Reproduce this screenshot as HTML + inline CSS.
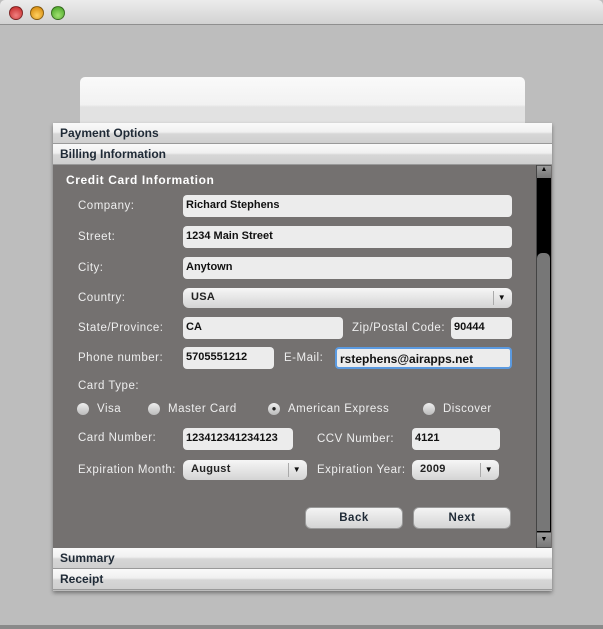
<!DOCTYPE html>
<html><head><style>
*{margin:0;padding:0;box-sizing:border-box}
body{width:603px;height:629px;background:#bdbdbd;font-family:"Liberation Sans",sans-serif;position:relative;overflow:hidden}
.a{position:absolute}
.tb{left:0;top:0;width:603px;height:25px;background:linear-gradient(#ececec,#d2d2d2);border-bottom:1px solid #8f8f8f;border-radius:5px 5px 0 0}
.dot{top:6px;width:14px;height:14px;border-radius:50%;border:1px solid rgba(0,0,0,.4)}
.hdr{left:53px;width:499px;height:21px;background:linear-gradient(#fafafa 0%,#f0f0f0 45%,#d6d6d6 55%,#cfcfcf);border-bottom:1px solid #999;font-size:12px;font-weight:bold;color:#1f2a36;padding:3px 0 0 7px}
.lbl{color:#eeeeee;font-size:11.5px;letter-spacing:.5px}
.in{background:#ececec;border-radius:4px;height:22px;font-size:11px;font-weight:bold;color:#111;padding:4px 0 0 3px}
.sel{background:linear-gradient(#f6f6f6,#d4d4d4);border-radius:6px;height:20px;font-size:11px;font-weight:bold;color:#222;padding:3px 0 0 8px;letter-spacing:.3px}
.sel:after{content:"▼";position:absolute;right:6px;top:5px;font-size:8px;color:#111}
.sel:before{content:"";position:absolute;right:18px;top:3px;height:14px;border-left:1px solid #aaa}
.rad{width:12px;height:12px;border-radius:50%;background:linear-gradient(#eee,#bbb)}
.btn{background:linear-gradient(#f4f4f4,#d4d4d4);border:1px solid #999;border-radius:6px;height:22px;font-size:11.5px;font-weight:bold;color:#1f2a36;text-align:center;padding-top:4px;letter-spacing:.5px}
</style></head><body>
<div class="a tb"></div>
<div class="a dot" style="left:9px;background:radial-gradient(circle at 50% 70%,#f08080,#c02020)"></div>
<div class="a dot" style="left:30px;background:radial-gradient(circle at 50% 70%,#ffd060,#d08000)"></div>
<div class="a dot" style="left:51px;background:radial-gradient(circle at 50% 70%,#a0e070,#40a020)"></div>
<div class="a" style="left:80px;top:77px;width:445px;height:50px;background:linear-gradient(#fafafa 0%,#f2f2f2 55%,#e2e2e2 60%,#e2e2e2);border-radius:5px 5px 0 0"></div>
<div class="a" style="left:53px;top:123px;width:499px;height:468px;box-shadow:0 2px 4px rgba(0,0,0,.4)"></div>
<div class="a hdr" style="top:123px">Payment Options</div>
<div class="a hdr" style="top:144px">Billing Information</div>
<div class="a" style="left:53px;top:165px;width:499px;height:383px;background:#747170"></div>
<div class="a" style="left:536px;top:165px;width:15px;height:383px;background:#555;border-left:1px solid #444"></div>
<div class="a" style="left:537px;top:166px;width:14px;height:12px;background:linear-gradient(#9a9a9a,#777);font-size:7px;text-align:center;color:#000">▲</div>
<div class="a" style="left:537px;top:178px;width:14px;height:354px;background:#000"></div>
<div class="a" style="left:537px;top:253px;width:13px;height:278px;background:#777;border-radius:5px 5px 0 0"></div>
<div class="a" style="left:537px;top:533px;width:14px;height:14px;background:linear-gradient(#9a9a9a,#777);font-size:7px;text-align:center;color:#000;padding-top:3px">▼</div>
<div class="a" style="left:66px;top:173px;color:#fff;font-size:12px;font-weight:bold;letter-spacing:.6px">Credit Card Information</div>
<div class="a lbl" style="left:78px;top:200px">Company:</div>
<div class="a in" style="left:183px;top:195px;width:329px">Richard Stephens</div>
<div class="a lbl" style="left:78px;top:231px">Street:</div>
<div class="a in" style="left:183px;top:226px;width:329px">1234 Main Street</div>
<div class="a lbl" style="left:78px;top:262px">City:</div>
<div class="a in" style="left:183px;top:257px;width:329px">Anytown</div>
<div class="a lbl" style="left:78px;top:292px">Country:</div>
<div class="a sel" style="left:183px;top:288px;width:329px">USA</div>
<div class="a lbl" style="left:78px;top:322px">State/Province:</div>
<div class="a in" style="left:183px;top:317px;width:160px">CA</div>
<div class="a lbl" style="left:352px;top:322px">Zip/Postal Code:</div>
<div class="a in" style="left:451px;top:317px;width:61px">90444</div>
<div class="a lbl" style="left:78px;top:352px">Phone number:</div>
<div class="a in" style="left:183px;top:347px;width:91px">5705551212</div>
<div class="a lbl" style="left:284px;top:352px">E-Mail:</div>
<div class="a in" style="left:335px;top:347px;width:177px;border:2px solid #5b9ae0;padding:3px 0 0 3px;font-size:12px">rstephens@airapps.net</div>
<div class="a lbl" style="left:78px;top:380px">Card Type:</div>
<div class="a rad" style="left:77px;top:403px"></div><div class="a lbl" style="left:97px;top:403px">Visa</div>
<div class="a rad" style="left:148px;top:403px"></div><div class="a lbl" style="left:168px;top:403px">Master Card</div>
<div class="a rad" style="left:268px;top:403px;text-align:center;font-size:8px;line-height:12px;color:#222">●</div><div class="a lbl" style="left:288px;top:403px">American Express</div>
<div class="a rad" style="left:423px;top:403px"></div><div class="a lbl" style="left:443px;top:403px">Discover</div>
<div class="a lbl" style="left:78px;top:432px">Card Number:</div>
<div class="a in" style="left:183px;top:428px;width:110px">123412341234123</div>
<div class="a lbl" style="left:317px;top:433px">CCV Number:</div>
<div class="a in" style="left:412px;top:428px;width:88px">4121</div>
<div class="a lbl" style="left:78px;top:464px">Expiration Month:</div>
<div class="a sel" style="left:183px;top:460px;width:124px">August</div>
<div class="a lbl" style="left:317px;top:464px">Expiration Year:</div>
<div class="a sel" style="left:412px;top:460px;width:87px">2009</div>
<div class="a btn" style="left:305px;top:507px;width:98px">Back</div>
<div class="a btn" style="left:413px;top:507px;width:98px">Next</div>
<div class="a hdr" style="top:548px">Summary</div>
<div class="a hdr" style="top:569px">Receipt</div>
<div class="a" style="left:0;top:625px;width:603px;height:4px;background:#8a8a8a"></div>
</body></html>
